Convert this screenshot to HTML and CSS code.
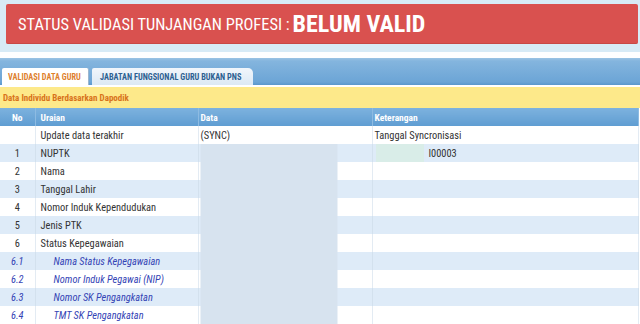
FILE: index.html
```html
<!DOCTYPE html>
<html>
<head>
<meta charset="utf-8">
<link rel="stylesheet" href="styles.css">
</head>
<body>
<div class="top">
  <div class="banner"><span class="lbl">STATUS VALIDASI TUNJANGAN PROFESI : </span><span class="val">BELUM VALID</span></div>
</div>
<div class="tabbar">
  <div class="tab active">VALIDASI DATA GURU</div>
  <div class="tab">JABATAN FUNGSIONAL GURU BUKAN PNS</div>
</div>
<div class="notice">Data Individu Berdasarkan Dapodik</div>
<table class="grid">
  <colgroup><col class="c-no"><col class="c-ur"><col class="c-da"><col class="c-ket"></colgroup>
  <thead>
    <tr><th class="no">No</th><th class="ur">Uraian</th><th class="da">Data</th><th class="ket">Keterangan</th></tr>
  </thead>
  <tbody>
    <tr><td class="no"></td><td class="ur">Update data terakhir</td><td class="da">(SYNC)</td><td class="ket">Tanggal Syncronisasi</td></tr>
    <tr class="alt"><td class="no">1</td><td class="ur">NUPTK</td><td class="da redact"></td><td class="ket"><span class="tint"></span><span class="code">I00003</span></td></tr>
    <tr><td class="no">2</td><td class="ur">Nama</td><td class="da redact"></td><td class="ket"></td></tr>
    <tr class="alt"><td class="no">3</td><td class="ur">Tanggal Lahir</td><td class="da redact"></td><td class="ket"></td></tr>
    <tr><td class="no">4</td><td class="ur">Nomor Induk Kependudukan</td><td class="da redact"></td><td class="ket"></td></tr>
    <tr class="alt"><td class="no">5</td><td class="ur">Jenis PTK</td><td class="da redact"></td><td class="ket"></td></tr>
    <tr><td class="no">6</td><td class="ur">Status Kepegawaian</td><td class="da redact"></td><td class="ket"></td></tr>
    <tr class="alt sub"><td class="no">6.1</td><td class="ur">Nama Status Kepegawaian</td><td class="da redact"></td><td class="ket"></td></tr>
    <tr class="sub"><td class="no">6.2</td><td class="ur">Nomor Induk Pegawai (NIP)</td><td class="da redact"></td><td class="ket"></td></tr>
    <tr class="alt sub"><td class="no">6.3</td><td class="ur">Nomor SK Pengangkatan</td><td class="da redact"></td><td class="ket"></td></tr>
    <tr class="sub"><td class="no">6.4</td><td class="ur">TMT SK Pengangkatan</td><td class="da redact"></td><td class="ket"></td></tr>
  </tbody>
</table>
</body>
</html>
```
FILE: styles.css
```css
* { box-sizing: border-box; }
html, body { margin: 0; padding: 0; }
body {
  width: 640px;
  height: 324px;
  overflow: hidden;
  background: #ffffff;
  font-family: "Roboto Condensed", "Liberation Sans Narrow", Roboto, "Liberation Sans", sans-serif;
  color: #333333;
}
.top {
  background: #d8ebf6;
  padding: 4px 2px 8px 6px;
  height: 52px;
}
.banner {
  height: 40px;
  background: #d9514f;
  border-radius: 2px;
  border-bottom: 1px solid #c84845;
  color: #ffffff;
  display: flex;
  align-items: center;
  padding-left: 12px;
  padding-top: 1px;
  white-space: nowrap;
}
.banner .lbl { font-size: 16.4px; }
.banner .val { font-size: 24px; font-weight: bold; margin-left: 3px; }
.tabbar {
  margin-top: 6px;
  height: 29px;
  background: linear-gradient(#9cc4e4 0px, #84b5de 3px, #6ca5d6 24px, #5a97cc 27px);
  display: flex;
  align-items: flex-end;
  padding-left: 2px;
  gap: 3px;
  border-bottom: 2px solid #ffffff;
}
.tab {
  height: 17px;
  font-size: 8.3px;
  font-weight: bold;
  white-space: nowrap;
  display: flex;
  align-items: center;
  padding: 0 6px;
  border-radius: 2px 2px 0 0;
}
.tab.active {
  background: #ffffff;
  color: #de7f2d;
  width: 87px;
  border-right: 1px solid #9cb6cf;
}
.tab:not(.active) {
  background: linear-gradient(#f1f6fb, #dce9f5);
  color: #2d5f91;
  width: 161px;
  padding-left: 8px;
  border-radius: 2px 5px 0 0;
}
.notice {
  height: 21px;
  background: #fde98a;
  color: #d8731a;
  font-size: 9px;
  font-weight: bold;
  display: flex;
  align-items: center;
  padding-left: 3px;
}
.grid {
  width: 638px;
  border-collapse: collapse;
  table-layout: fixed;
  font-size: 10.4px;
}
.c-no { width: 35px; }
.c-ur { width: 163px; }
.c-da { width: 174px; }
.c-ket { width: 266px; }
.grid th {
  height: 18px;
  background: linear-gradient(#7db2de, #5f9dd2);
  color: #ffffff;
  font-size: 9.5px;
  font-weight: bold;
  text-align: left;
  padding: 0 2px;
  border-right: 1px solid #8dbbe2;
}
.grid th.no { text-align: center; }
.grid th.ur { padding-left: 5px; }
.grid td {
  height: 18px;
  padding: 0 2px;
  white-space: nowrap;
  border-right: 1px solid #e3ebf3;
  background-color: #ffffff;
}
.grid tr.alt td { background-color: #deebf8; border-right-color: #d3e1ee; }
.grid td.no { text-align: center; }
.grid td.ur { padding-left: 5px; }
.grid td.redact {
  background-image: linear-gradient(to right, transparent 2px, #d7e3ef 2px, #d7e3ef 139px, transparent 139px);
}
.grid tr.sub td { color: #3444b5; font-style: italic; }
.grid tr.sub td.ur { padding-left: 18px; }
.tint {
  display: inline-block;
  width: 48px;
  height: 18px;
  vertical-align: middle;
  background: #d9ede8;
  margin-left: 1px;
}
.code { margin-left: 5px; vertical-align: middle; }
```
